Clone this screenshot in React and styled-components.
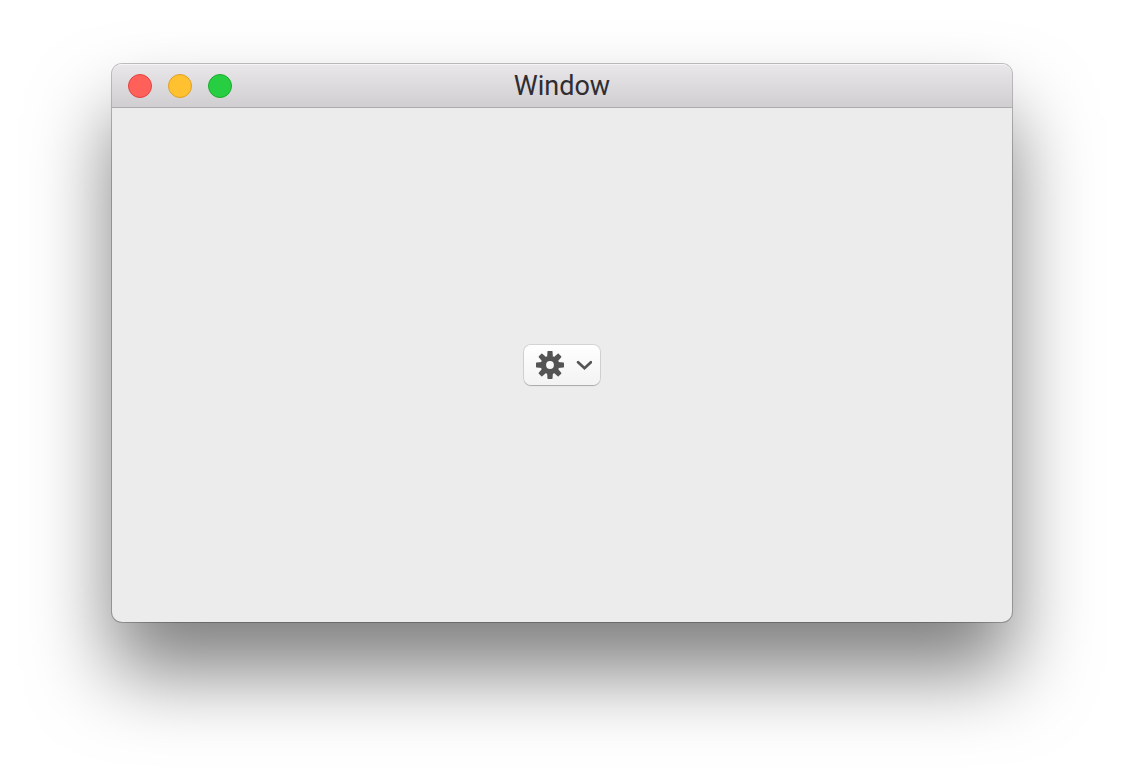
import React from "react";
import styled, { createGlobalStyle } from "styled-components";

const GlobalStyle = createGlobalStyle`
  * { box-sizing: border-box; }
  body { margin: 0; background: #fff; font-family: Roboto, "Liberation Sans", sans-serif; }
`;

const Desktop = styled.div`
  display: flex;
  min-height: 100vh;
  padding: 64px 112px 160px;
  overflow: hidden;
`;

const WindowFrame = styled.main`
  flex: 1;
  display: flex;
  flex-direction: column;
  border-radius: 10px;
  background: #ececec;
  box-shadow:
    0 0 0 1px rgba(0, 0, 0, 0.24),
    0 50px 80px rgba(0, 0, 0, 0.5);
`;

const TitleBar = styled.header`
  display: grid;
  grid-template-columns: 1fr auto 1fr;
  align-items: center;
  height: 44px;
  padding: 0 16px;
  border-radius: 10px 10px 0 0;
  border-bottom: 1px solid #aeabae;
  background: linear-gradient(#e9e7ea, #d1ced2);
  box-shadow: inset 0 2px 0 -1px #f6f5f6;
`;

const TrafficLights = styled.div`
  display: flex;
  gap: 16px;
`;

const Light = styled.button`
  width: 24px;
  height: 24px;
  padding: 0;
  border: 1px solid ${(p) => p.$edge};
  border-radius: 50%;
  background: ${(p) => p.$fill};
`;

const Title = styled.h1`
  margin: 0;
  color: #302d31;
  font-size: 27px;
  font-weight: 400;
  line-height: 32px;
`;

const Content = styled.section`
  flex: 1;
  display: flex;
  align-items: center;
  justify-content: center;
`;

const ActionButton = styled.button`
  display: flex;
  align-items: center;
  gap: 12px;
  width: 76px;
  height: 40px;
  padding: 0 8px 0 12px;
  border: 0;
  border-radius: 7px;
  background: linear-gradient(#fff, #f3f3f3);
  box-shadow:
    0 0 0 1px rgba(0, 0, 0, 0.1),
    0 1px 1px rgba(0, 0, 0, 0.2);
  color: #545454;

  svg { display: block; flex: none; }
`;

const lights = [
  { name: "Close", fill: "#ff6059", edge: "#e2453f" },
  { name: "Minimize", fill: "#ffc130", edge: "#dfa023" },
  { name: "Zoom", fill: "#28ce42", edge: "#1bac2c" },
];

const teeth = [0, 45, 90, 135, 180, 225, 270, 315];

function GearIcon() {
  return (
    <svg width="28" height="28" viewBox="-14 -14 28 28" aria-hidden="true">
      <circle r="6.6" fill="none" stroke="currentColor" strokeWidth="5.4" />
      {teeth.map((angle) => (
        <path
          key={angle}
          d="M-2.9-8.2L-2.5-13.4Q-2.4-14-1.8-14H1.8Q2.4-14 2.5-13.4L2.9-8.2Z"
          fill="currentColor"
          transform={`rotate(${angle})`}
        />
      ))}
    </svg>
  );
}

function ChevronIcon() {
  return (
    <svg width="16" height="12" viewBox="0 0 16 12" aria-hidden="true">
      <path
        d="M2.1 3.2L8.5 9.2L14.9 3.2"
        fill="none"
        stroke="currentColor"
        strokeWidth="2.7"
        strokeLinecap="round"
        strokeLinejoin="miter"
      />
    </svg>
  );
}

export default function App() {
  return (
    <>
      <GlobalStyle />
      <Desktop>
        <WindowFrame>
          <TitleBar>
            <TrafficLights>
              {lights.map((l) => (
                <Light key={l.name} type="button" aria-label={l.name} $fill={l.fill} $edge={l.edge} />
              ))}
            </TrafficLights>
            <Title>Window</Title>
          </TitleBar>
          <Content>
            <ActionButton type="button" aria-label="Actions" aria-haspopup="menu">
              <GearIcon />
              <ChevronIcon />
            </ActionButton>
          </Content>
        </WindowFrame>
      </Desktop>
    </>
  );
}
